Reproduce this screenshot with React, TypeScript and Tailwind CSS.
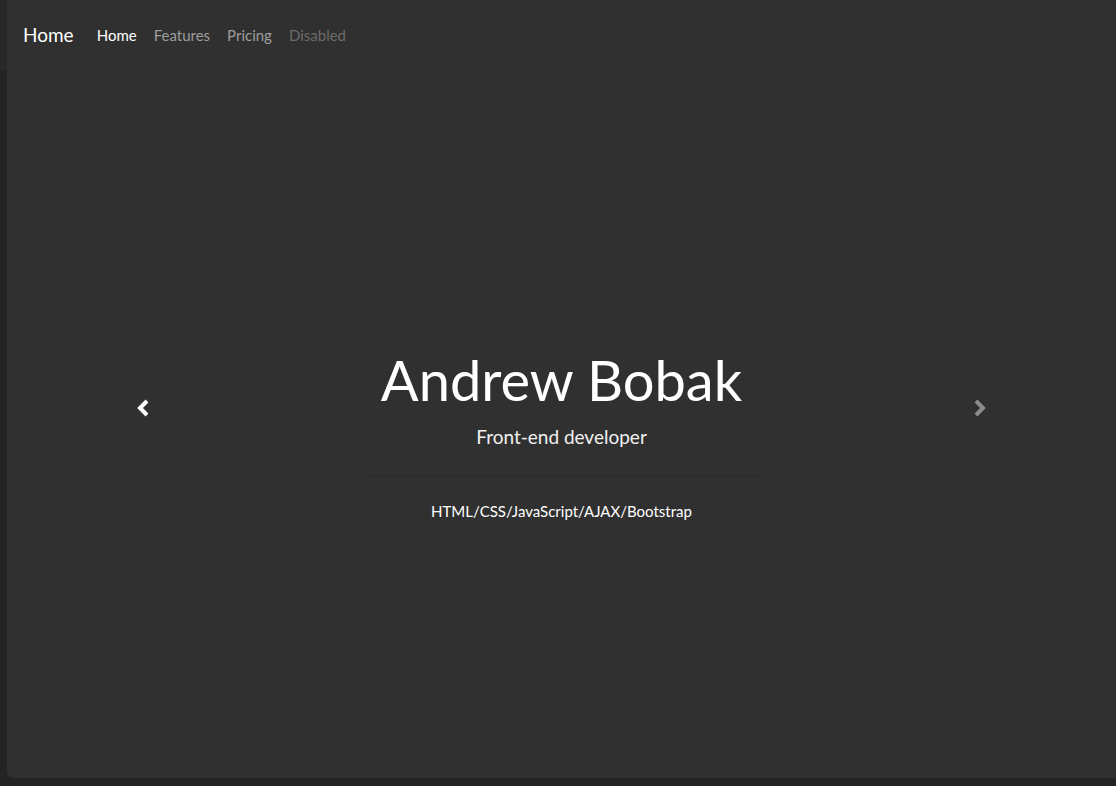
import React from "react";

const Chevron = ({ dir, color }: { dir: "left" | "right"; color: string }) => (
  <svg width="16" height="18" viewBox="0 0 16 18" className="block">
    <path
      d={dir === "left" ? "M11 2 L4 9 L11 16" : "M5 2 L12 9 L5 16"}
      fill="none"
      stroke={color}
      strokeWidth="4"
      strokeLinejoin="miter"
      strokeLinecap="butt"
    />
  </svg>
);

export default function App() {
  return (
    <div
      className="w-[1116px] h-[786px] bg-[#232323] flex flex-col overflow-hidden"
      style={{ fontFamily: "Lato, 'Open Sans', sans-serif" }}
    >
      <div className="flex flex-1">
        <div className="w-[7px] flex flex-col">
          <div className="h-[70px] bg-[#282828]" />
          <div className="flex-1 bg-[#242424]" />
        </div>
        <div className="flex-1 bg-[#303030] rounded-bl-[6px] flex flex-col relative">
          <nav className="h-[70px] flex items-center pl-[16px]">
            <span className="text-[19px] text-white">Home</span>
            <div className="flex items-center gap-[17px] ml-[23px] text-[15px]">
              <span className="text-white">Home</span>
              <span className="text-[#9d9d9d]">Features</span>
              <span className="text-[#9d9d9d]">Pricing</span>
              <span className="text-[#6b6b6b]">Disabled</span>
            </div>
          </nav>
          <div className="flex-1 flex flex-col items-center pt-[276px]">
            <h1 className="text-[56px] leading-[68px] text-white font-normal">Andrew Bobak</h1>
            <p className="text-[19px] leading-[24px] text-[#f0f0f0] mt-[11px]">Front-end developer</p>
            <div className="w-[395px] h-px bg-[#2a2a2a] mt-[26px]" />
            <p className="text-[15px] leading-[20px] text-white mt-[25px]">
              HTML/CSS/JavaScript/AJAX/Bootstrap
            </p>
          </div>
          <div className="absolute left-[129px] top-[399px]">
            <Chevron dir="left" color="#ffffff" />
          </div>
          <div className="absolute right-[129px] top-[399px]">
            <Chevron dir="right" color="#8c8c8c" />
          </div>
        </div>
      </div>
      <div className="h-[8px]" />
    </div>
  );
}
